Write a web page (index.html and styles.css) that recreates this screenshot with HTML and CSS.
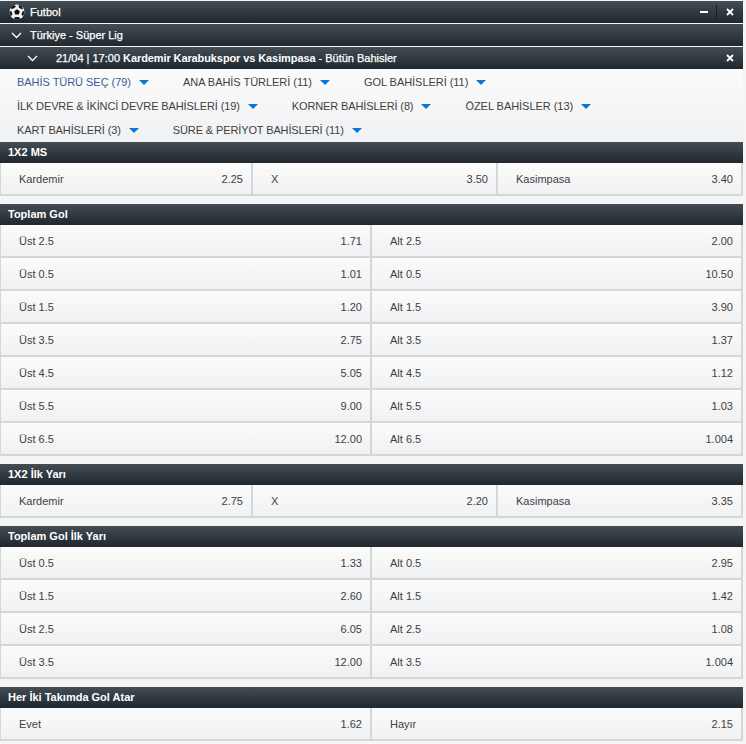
FILE: index.html
```html
<!DOCTYPE html>
<html lang="tr">
<head>
<meta charset="utf-8">
<title>Futbol</title>
<link rel="stylesheet" href="styles.css">
</head>
<body>
<div class="page">
  <div class="bar bar-top">
    <svg class="ball" width="16" height="16" viewBox="0 0 16 16"><circle cx="8" cy="8" r="7.600" fill="#f2f2f2"/><path d="M8 5.300l2.800 2-1 3.200H6.200l-1-3.200z" fill="#0c0c0c"/><path d="M4.800.900 7 2.300 5.500 4 2.500 5.200 1.900 3.200zM10 .600 13 2.500l1 2.800-2-.300-2.400-1.800zM.500 7l2.300.500.600 3-1.500 1.800A7.600 7.600 0 0 1 .500 7zM15.500 7l-2.200.500-.800 3 1.400 1.800A7.600 7.600 0 0 0 15.500 7zM6 13l4 0 1.200 2A7.600 7.600 0 0 1 5 15z" fill="#1a1a1a"/></svg>
    <span class="bar-title">Futbol</span>
    <span class="bar-actions"><span class="minus"></span><span class="divider"></span><svg class="x" width="8" height="8" viewBox="0 0 8 8"><path d="M1 1l6 6M7 1L1 7" stroke="#fff" stroke-width="1.800"/></svg></span>
  </div>
  <div class="bar bar-league">
    <svg class="chev" width="11" height="7" viewBox="0 0 11 7"><path d="M1 1l4.500 4.500L10 1" fill="none" stroke="#fff" stroke-width="1.300"/></svg>
    <span class="bar-title">Türkiye - Süper Lig</span>
  </div>
  <div class="bar bar-match">
    <svg class="chev chev-match" width="11" height="7" viewBox="0 0 11 7"><path d="M1 1l4.500 4.500L10 1" fill="none" stroke="#fff" stroke-width="1.300"/></svg>
    <span class="bar-title">21/04 | 17:00 <b>Kardemir Karabukspor vs Kasimpasa</b> - Bütün Bahisler</span>
    <span class="bar-actions"><svg class="x" width="8" height="8" viewBox="0 0 8 8"><path d="M1 1l6 6M7 1L1 7" stroke="#fff" stroke-width="1.800"/></svg></span>
  </div>

  <nav class="menu">
    <a class="tab tab-active">BAHİS TÜRÜ SEÇ (79)</a>
    <a class="tab">ANA BAHİS TÜRLERİ (11)</a>
    <a class="tab">GOL BAHİSLERİ (11)</a>
    <a class="tab tab-tight">İLK DEVRE &amp; İKİNCİ DEVRE BAHİSLERİ (19)</a>
    <a class="tab tab-tight">KORNER BAHİSLERİ (8)</a>
    <a class="tab">ÖZEL BAHİSLER (13)</a>
    <a class="tab tab-tight">KART BAHİSLERİ (3)</a>
    <a class="tab tab-tight">SÜRE &amp; PERİYOT BAHİSLERİ (11)</a>
  </nav>

  <section class="market">
    <h2 class="market-title">1X2 MS</h2>
    <div class="row row-3"><div class="cell"><span>Kardemir</span><span>2.25</span></div><div class="cell"><span>X</span><span>3.50</span></div><div class="cell"><span>Kasimpasa</span><span>3.40</span></div></div>
  </section>

  <section class="market">
    <h2 class="market-title">Toplam Gol</h2>
    <div class="row row-2"><div class="cell"><span>Üst 2.5</span><span>1.71</span></div><div class="cell"><span>Alt 2.5</span><span>2.00</span></div></div>
    <div class="row row-2"><div class="cell"><span>Üst 0.5</span><span>1.01</span></div><div class="cell"><span>Alt 0.5</span><span>10.50</span></div></div>
    <div class="row row-2"><div class="cell"><span>Üst 1.5</span><span>1.20</span></div><div class="cell"><span>Alt 1.5</span><span>3.90</span></div></div>
    <div class="row row-2"><div class="cell"><span>Üst 3.5</span><span>2.75</span></div><div class="cell"><span>Alt 3.5</span><span>1.37</span></div></div>
    <div class="row row-2"><div class="cell"><span>Üst 4.5</span><span>5.05</span></div><div class="cell"><span>Alt 4.5</span><span>1.12</span></div></div>
    <div class="row row-2"><div class="cell"><span>Üst 5.5</span><span>9.00</span></div><div class="cell"><span>Alt 5.5</span><span>1.03</span></div></div>
    <div class="row row-2"><div class="cell"><span>Üst 6.5</span><span>12.00</span></div><div class="cell"><span>Alt 6.5</span><span>1.004</span></div></div>
  </section>

  <section class="market">
    <h2 class="market-title">1X2 İlk Yarı</h2>
    <div class="row row-3"><div class="cell"><span>Kardemir</span><span>2.75</span></div><div class="cell"><span>X</span><span>2.20</span></div><div class="cell"><span>Kasimpasa</span><span>3.35</span></div></div>
  </section>

  <section class="market">
    <h2 class="market-title">Toplam Gol İlk Yarı</h2>
    <div class="row row-2"><div class="cell"><span>Üst 0.5</span><span>1.33</span></div><div class="cell"><span>Alt 0.5</span><span>2.95</span></div></div>
    <div class="row row-2"><div class="cell"><span>Üst 1.5</span><span>2.60</span></div><div class="cell"><span>Alt 1.5</span><span>1.42</span></div></div>
    <div class="row row-2"><div class="cell"><span>Üst 2.5</span><span>6.05</span></div><div class="cell"><span>Alt 2.5</span><span>1.08</span></div></div>
    <div class="row row-2"><div class="cell"><span>Üst 3.5</span><span>12.00</span></div><div class="cell"><span>Alt 3.5</span><span>1.004</span></div></div>
  </section>

  <section class="market">
    <h2 class="market-title">Her İki Takımda Gol Atar</h2>
    <div class="row row-2"><div class="cell"><span>Evet</span><span>1.62</span></div><div class="cell"><span>Hayır</span><span>2.15</span></div></div>
  </section>
</div>
</body>
</html>
```
FILE: styles.css
```css
* { box-sizing: border-box; }
html, body { margin: 0; padding: 0; background: #f5f5f6; }
body { font-family: "Liberation Sans", Arial, sans-serif; font-size: 11px; color: #333; overflow: hidden; height: 744px; }
.page { width: 743px; padding-top: 1px; }

.bar { height: 22px; margin-bottom: 1px; display: flex; align-items: center; color: #fff; background: linear-gradient(#434d53, #20282f); }
.bar-top { padding-left: 9px; }
.bar-league { padding-left: 11px; }
.bar-match { margin-bottom: 0; padding-left: 27px; }
.bar-title { margin-left: 8px; font-size: 11px; font-weight: 400; -webkit-text-stroke: 0.25px #fff; }
.bar-top .bar-title { margin-left: 5px; }
.bar-match .bar-title { margin-left: 18px; }
.bar-title b { font-weight: 700; -webkit-text-stroke: 0; letter-spacing: -0.1px; }
.bar-actions { margin-left: auto; margin-right: 9px; display: flex; align-items: center; }
.minus { width: 8px; height: 2px; background: #fff; }
.divider { width: 1px; height: 15px; background: #1a2025; margin: 0 9px 0 8px; }
.x { display: block; }

.menu { height: 73px; padding: 1px 0 0 17px; display: flex; flex-wrap: wrap; align-content: flex-start; background: linear-gradient(#fbfbfb, #f0f1f3); }
.tab { height: 24px; margin-right: 34px; font-size: 11px; letter-spacing: -0.04px; color: #3f3f3f; display: flex; align-items: center; }
.tab-tight { letter-spacing: -0.12px; }
.tab::after { content: ""; margin-left: 8px; border-left: 5px solid transparent; border-right: 5px solid transparent; border-top: 5px solid #0a76d6; }
.tab-active { color: #3c5a9a; }

.market { margin-bottom: 8px; }
.market-title { margin: 0; height: 21px; line-height: 20px; padding-left: 8px; font-size: 11px; font-weight: 700; color: #fff; background: linear-gradient(#434d53, #20282f); }

.row { display: grid; height: 33px; gap: 2px; background: #d3d7d8; padding: 0 2px 2px 1px; }
.row-3 { grid-template-columns: 250px 243px 1fr; }
.row-2 { grid-template-columns: 369px 1fr; }
.cell { display: flex; justify-content: space-between; align-items: center; padding: 0 8px 0 18px; color: #3f3f3f; background: linear-gradient(#fbfbfb, #f0f1f3); }
```
